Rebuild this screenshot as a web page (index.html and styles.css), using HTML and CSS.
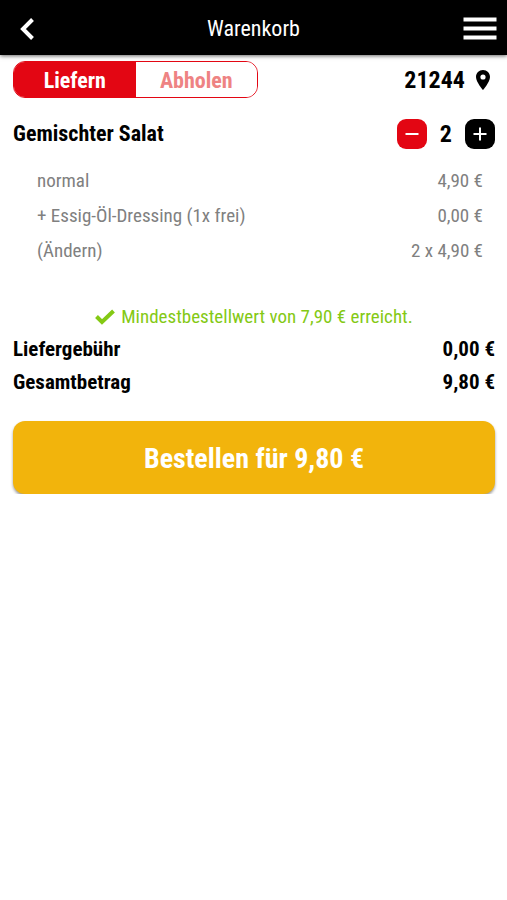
FILE: index.html
```html
<!DOCTYPE html>
<html lang="de">
<head>
    <meta charset="UTF-8">
    <meta name="viewport" content="width=device-width, initial-scale=1.0">
    <title>Warenkorb</title>
    <link rel="stylesheet" href="styles.css">
</head>
<body>
    <!-- Top bar -->
    <header class="topbar">
        <button type="button" class="icon-button" aria-label="Zurück">
            <svg width="14" height="22" viewBox="0 0 14 22"><path d="M12.5 1.5 L3 11 L12.5 20.5" fill="none" stroke="#fff" stroke-width="4"/></svg>
        </button>
        <h1>Warenkorb</h1>
        <button type="button" class="icon-button menu-button" aria-label="Menü">
            <svg width="34" height="24" viewBox="0 0 34 24" fill="#fff"><path d="M0.5 0.5h33v4h-33zM0.5 9.5h33v4h-33zM0.5 18.5h33v4h-33z"/></svg>
        </button>
    </header>

    <main class="cart">
        <!-- Delivery or pickup -->
        <div class="order-type">
            <div class="switch">
                <button type="button" class="switch-option active" aria-pressed="true">Liefern</button>
                <button type="button" class="switch-option" aria-pressed="false">Abholen</button>
            </div>
            <a href="#" class="zip">21244
                <svg width="16" height="22" viewBox="0 0 16 22"><path fill-rule="evenodd" d="M8 1C4 1 1 4 1 8c0 5 7 13 7 13s7-8 7-13c0-4-3-7-7-7zm0 4.4a2.6 2.6 0 1 1 0 5.2a2.6 2.6 0 0 1 0-5.2z"/></svg>
            </a>
        </div>

        <!-- Cart item -->
        <section class="item">
            <div class="item-head">
                <h2>Gemischter Salat</h2>
                <div class="quantity">
                    <button type="button" class="quantity-button minus" aria-label="Weniger">
                        <svg width="14" height="14" viewBox="0 0 14 14"><path d="M0.5 7h13" stroke="#fff" stroke-width="2"/></svg>
                    </button>
                    <span>2</span>
                    <button type="button" class="quantity-button plus" aria-label="Mehr">
                        <svg width="14" height="14" viewBox="0 0 14 14"><path d="M0.5 7h13M7 0.5v13" stroke="#fff" stroke-width="2"/></svg>
                    </button>
                </div>
            </div>
            <ul class="item-details">
                <li><span>normal</span><span>4,90 €</span></li>
                <li><span>+ Essig-Öl-Dressing (1x frei)</span><span>0,00 €</span></li>
                <li><a href="#">(Ändern)</a><span>2 x 4,90 €</span></li>
            </ul>
        </section>

        <p class="minimum">
            <svg width="20" height="16" viewBox="0 0 20 16"><path d="M1.5 7.5L7 13L18.5 2" fill="none" stroke="#84c914" stroke-width="4"/></svg>
            Mindestbestellwert von 7,90 € erreicht.
        </p>

        <!-- Totals -->
        <dl class="totals">
            <div><dt>Liefergebühr</dt><dd>0,00 €</dd></div>
            <div><dt>Gesamtbetrag</dt><dd>9,80 €</dd></div>
        </dl>

        <button type="button" class="order-button">Bestellen für 9,80 €</button>
    </main>
</body>
</html>
```
FILE: styles.css
```css
* {
    box-sizing: border-box;
}
body {
    font-family: "Roboto Condensed", Roboto, sans-serif;
    font-size: 19px;
    background-color: #fff;
    color: #000;
    margin: 0;
}
h1, h2, p, ul, dl, dd {
    margin: 0;
    padding: 0;
}
button {
    font-family: inherit;
    border: none;
    padding: 0;
    cursor: pointer;
}
a {
    color: inherit;
    text-decoration: none;
}
svg {
    display: block;
}
/* Top bar */
.topbar {
    display: grid;
    grid-template-columns: 1fr auto 1fr;
    align-items: center;
    height: 55px;
    padding: 2px 10px 0;
    background-color: #000;
    color: #fff;
    box-shadow: 0 1px 4px rgba(0,0,0,0.6);
}
.topbar h1 {
    font-size: 22px;
    font-weight: 400;
    line-height: 32px;
}
.icon-button {
    justify-self: start;
    padding-left: 10px;
    background: none;
}
.menu-button {
    justify-self: end;
}
.cart {
    padding: 6px 12px 0 13px;
}
/* Delivery / pickup switch */
.order-type {
    display: flex;
    justify-content: space-between;
    align-items: center;
}
.switch {
    display: flex;
    width: 245px;
    height: 37px;
    border: 1px solid #e30613;
    border-radius: 12px;
    overflow: hidden;
}
.switch-option {
    flex: 1;
    padding-top: 2px;
    background-color: #fff;
    color: #ee8383;
    font-size: 22px;
    font-weight: 700;
}
.switch-option.active {
    background-color: #e30613;
    color: #fff;
}
.zip {
    display: flex;
    align-items: center;
    gap: 10px;
    padding-right: 4px;
    font-size: 24px;
    font-weight: 700;
}
/* Cart item */
.item-head {
    display: flex;
    justify-content: space-between;
    align-items: center;
    padding: 21px 0 14px;
}
.item-head h2 {
    font-size: 22px;
    line-height: 30px;
}
.quantity {
    display: flex;
    align-items: center;
    gap: 13px;
    font-size: 24px;
    line-height: 30px;
    font-weight: 700;
}
.quantity-button {
    display: flex;
    justify-content: center;
    align-items: center;
    width: 30px;
    height: 30px;
    border-radius: 9px;
}
.minus {
    background-color: #e30613;
}
.plus {
    background-color: #000;
}
.item-details {
    list-style: none;
    padding: 0 12px 0 24px;
    color: #808080;
    line-height: 35px;
}
.item-details li {
    display: flex;
    justify-content: space-between;
}
/* Minimum order note */
.minimum {
    display: flex;
    justify-content: center;
    align-items: center;
    gap: 6px;
    padding-top: 33px;
    color: #84c914;
    line-height: 32px;
}
/* Totals */
.totals {
    font-size: 21px;
    font-weight: 700;
    line-height: 33px;
}
.totals div {
    display: flex;
    justify-content: space-between;
}
.order-button {
    width: 100%;
    height: 73px;
    margin-top: 22px;
    padding-top: 2px;
    border-radius: 12px;
    background-color: #f2b40c;
    color: #fff;
    font-size: 28px;
    font-weight: 700;
    box-shadow: 0 2px 3px rgba(0,0,0,0.4);
}
```
